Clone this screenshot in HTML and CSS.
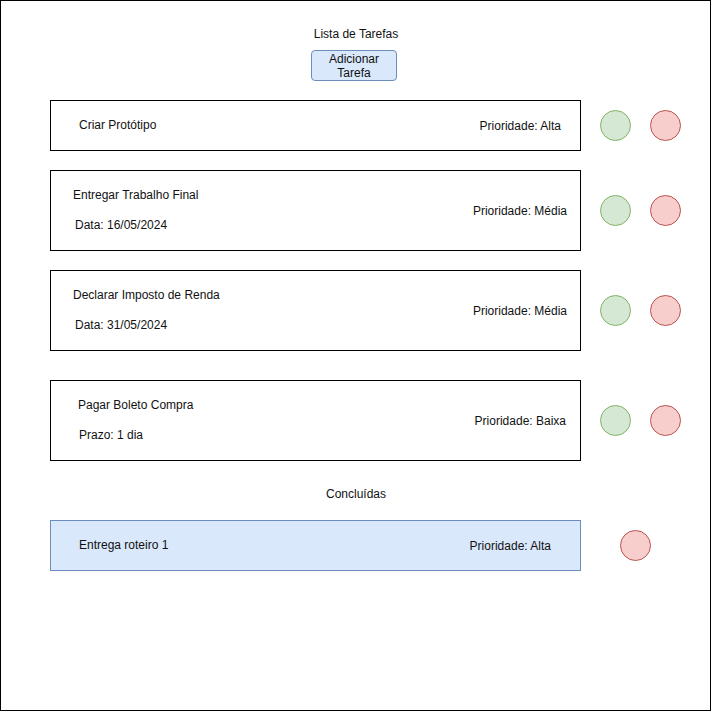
FILE: index.html
```html
<!DOCTYPE html>
<html lang="pt">
<head>
<meta charset="utf-8">
<title>Lista de Tarefas</title>
<link rel="stylesheet" href="styles.css">
</head>
<body>
<div class="frame">
  <div class="title">Lista de Tarefas</div>
  <div class="add-btn"><span>Adicionar</span><span>Tarefa</span></div>

  <div class="list">
    <div class="row">
      <div class="card single">
        <div class="info"><div class="name">Criar Protótipo</div></div>
        <div class="prio">Prioridade: Alta</div>
      </div>
      <div class="dot ok"></div>
      <div class="dot del"></div>
    </div>

    <div class="row">
      <div class="card double">
        <div class="info a">
          <div class="name">Entregar Trabalho Final</div>
          <div class="meta">Data: 16/05/2024</div>
        </div>
        <div class="prio">Prioridade: Média</div>
      </div>
      <div class="dot ok"></div>
      <div class="dot del"></div>
    </div>

    <div class="row">
      <div class="card double">
        <div class="info a">
          <div class="name">Declarar Imposto de Renda</div>
          <div class="meta">Data: 31/05/2024</div>
        </div>
        <div class="prio">Prioridade: Média</div>
      </div>
      <div class="dot ok"></div>
      <div class="dot del"></div>
    </div>

    <div class="row spaced">
      <div class="card double b">
        <div class="info b">
          <div class="name">Pagar Boleto Compra</div>
          <div class="meta">Prazo: 1 dia</div>
        </div>
        <div class="prio">Prioridade: Baixa</div>
      </div>
      <div class="dot ok"></div>
      <div class="dot del"></div>
    </div>
  </div>

  <div class="section">Concluídas</div>

  <div class="list done-list">
    <div class="row">
      <div class="card single done">
        <div class="info"><div class="name">Entrega roteiro 1</div></div>
        <div class="prio">Prioridade: Alta</div>
      </div>
      <div class="dot del far"></div>
    </div>
  </div>
</div>
</body>
</html>
```

FILE: styles.css
```css
html, body {
  margin: 0;
  padding: 0;
  background: #fff;
}

body {
  font-family: "Liberation Sans", Arial, Helvetica, sans-serif;
  font-size: 12px;
  line-height: 14px;
  color: #111;
}

.frame {
  width: 711px;
  height: 711px;
  box-sizing: border-box;
  border: 1px solid #000;
  display: flex;
  flex-direction: column;
  align-items: flex-start;
}

.title {
  align-self: stretch;
  text-align: center;
  margin-top: 26px;
  margin-left: 1px;
}

.add-btn {
  margin-top: 9px;
  margin-left: 310px;
  width: 86px;
  height: 31px;
  box-sizing: border-box;
  background: #dae8fc;
  border: 1px solid #6c8ebf;
  border-radius: 4px;
  display: flex;
  flex-direction: column;
  align-items: center;
  justify-content: center;
  text-align: center;
}

.list {
  margin-top: 19px;
  margin-left: 49px;
  display: flex;
  flex-direction: column;
  gap: 19px;
}

.row {
  display: flex;
  align-items: center;
  gap: 19px;
}

.row.spaced {
  margin-top: 10px;
}

.card {
  width: 531px;
  box-sizing: border-box;
  border: 1px solid #000;
  background: #fff;
  display: flex;
  align-items: center;
  justify-content: space-between;
  padding: 0 13px 0 22px;
}

.card.single {
  height: 51px;
  padding: 0 19px 0 28px;
}

.card.double {
  height: 81px;
}

.card.double.b {
  padding: 0 14px 0 27px;
}

.card.done {
  background: #dae8fc;
  border-color: #6c8ebf;
  padding: 0 29px 0 28px;
}

.info {
  display: flex;
  flex-direction: column;
  gap: 16px;
  margin-top: -1px;
}

.info.a .meta {
  margin-left: 2px;
}

.info.b .meta {
  margin-left: 1px;
}

.dot {
  width: 31px;
  height: 31px;
  box-sizing: border-box;
  border-radius: 50%;
}

.dot.ok {
  background: #d5e8d4;
  border: 1px solid #82b366;
}

.dot.del {
  background: #f8cecc;
  border: 1px solid #b85450;
}

.dot.far {
  margin-left: 20px;
}

.section {
  align-self: stretch;
  text-align: center;
  margin-top: 26px;
  margin-left: 1px;
}

.done-list {
  margin-top: 19px;
}
```
